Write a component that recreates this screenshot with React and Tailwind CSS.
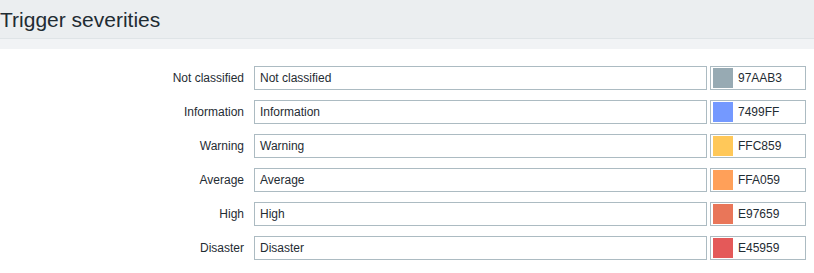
import React from 'react';

const severities = [
  { label: 'Not classified', color: '97AAB3' },
  { label: 'Information', color: '7499FF' },
  { label: 'Warning', color: 'FFC859' },
  { label: 'Average', color: 'FFA059' },
  { label: 'High', color: 'E97659' },
  { label: 'Disaster', color: 'E45959' },
];

const App = () => {
  return (
    <div className="w-[814px] h-[273px] bg-white text-[#1f2c33] font-['Liberation_Sans',Arial,sans-serif] overflow-hidden">
      <div className="h-[39px] bg-[#ebeef0] border-b border-[#dfe4e7] flex items-center">
        <h1 className="text-[21px] leading-none font-normal">Trigger severities</h1>
      </div>
      <div className="h-[10px] bg-[#f1f3f5]" />

      <div className="flex flex-col gap-[10px] pt-[17px]">
        {severities.map((s) => (
          <div key={s.label} className="flex items-center h-[24px]">
            <label className="w-[244px] text-right text-[12px]">{s.label}</label>
            <div className="ml-[10px] w-[453px] h-[24px] border border-[#acbbc2] flex items-center px-[5px] text-[12px]">
              {s.label}
            </div>
            <div className="ml-[3px] w-[96px] h-[24px] border border-[#acbbc2] flex items-center pl-[2px] text-[12px]">
              <span className="w-[20px] h-[20px] block" style={{ backgroundColor: `#${s.color}` }} />
              <span className="ml-[5px]">{s.color}</span>
            </div>
          </div>
        ))}
      </div>
    </div>
  );
};

export default App;
